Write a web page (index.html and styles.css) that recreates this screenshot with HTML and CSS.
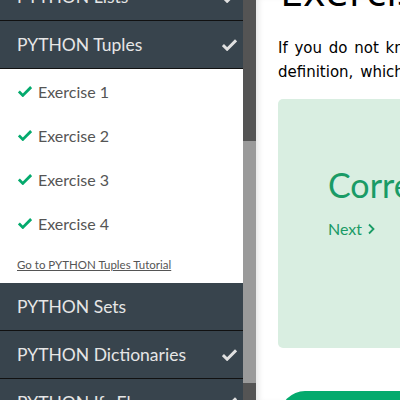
FILE: index.html
```html
<!DOCTYPE html>
<html>
<head>
<meta charset="utf-8">
<link rel="stylesheet" href="styles.css">
</head>
<body>
<div class="page">
  <nav class="sidebar">
    <div class="row first">PYTHON Lists<svg class="tick" viewBox="0 0 16 13"><path d="M1 7l4.5 4.5L15 2" fill="none" stroke="#e0e0e0" stroke-width="3.2"/></svg></div>
    <div class="row">PYTHON Tuples<svg class="tick" viewBox="0 0 16 13"><path d="M1 7l4.5 4.5L15 2" fill="none" stroke="#e0e0e0" stroke-width="3.2"/></svg></div>
    <div class="open">
      <div class="ex"><svg class="gtick" viewBox="0 0 16 13"><path d="M1 7l4.5 4.5L15 2" fill="none" stroke="#04aa6d" stroke-width="3.2"/></svg>Exercise 1</div>
      <div class="ex"><svg class="gtick" viewBox="0 0 16 13"><path d="M1 7l4.5 4.5L15 2" fill="none" stroke="#04aa6d" stroke-width="3.2"/></svg>Exercise 2</div>
      <div class="ex"><svg class="gtick" viewBox="0 0 16 13"><path d="M1 7l4.5 4.5L15 2" fill="none" stroke="#04aa6d" stroke-width="3.2"/></svg>Exercise 3</div>
      <div class="ex"><svg class="gtick" viewBox="0 0 16 13"><path d="M1 7l4.5 4.5L15 2" fill="none" stroke="#04aa6d" stroke-width="3.2"/></svg>Exercise 4</div>
      <a class="golink" href="#">Go to PYTHON Tuples Tutorial</a>
    </div>
    <div class="row">PYTHON Sets</div>
    <div class="row">PYTHON Dictionaries<svg class="tick" viewBox="0 0 16 13"><path d="M1 7l4.5 4.5L15 2" fill="none" stroke="#e0e0e0" stroke-width="3.2"/></svg></div>
    <div class="row">PYTHON If...Else<svg class="tick" viewBox="0 0 16 13"><path d="M1 7l4.5 4.5L15 2" fill="none" stroke="#e0e0e0" stroke-width="3.2"/></svg></div>
  </nav>
  <div class="scrollbar">
    <div class="track-top"></div>
    <div class="thumb"></div>
    <div class="track-bottom"></div>
  </div>
  <main class="main">
    <h1 class="title">Exercise:</h1>
    <p class="text">If you do not know the answer, look at the tuple<br>definition, which describes how tuples work.</p>
    <div class="result">
      <div class="correct">Correct!</div>
      <div class="next">Next<svg class="chev" viewBox="0 0 8 12"><path d="M2 1.5l4.5 4.5L2 10.5" fill="none" stroke="#1a9b66" stroke-width="1.8"/></svg></div>
    </div>
    <div class="btn"></div>
  </main>
</div>
</body>
</html>
```

FILE: styles.css
```css
html, body {
  margin: 0;
  padding: 0;
  background: #fff;
  overflow: hidden;
}
.page {
  display: flex;
  width: 400px;
  height: 400px;
  overflow: hidden;
}
.sidebar {
  width: 243px;
  flex: none;
  background: #38444d;
  margin-top: -27px;
  font-family: Lato, "Open Sans", sans-serif;
}
.row {
  height: 47px;
  border-bottom: 1px solid #111;
  display: flex;
  align-items: center;
  justify-content: space-between;
  padding: 0 6px 0 17px;
  color: #e6e6e6;
  font-size: 17.5px;
}
.tick {
  width: 15px;
  height: 13px;
}
.open {
  background: #fff;
  height: 214px;
  padding-top: 0;
  box-sizing: border-box;
}
.ex {
  height: 44px;
  display: flex;
  align-items: center;
  padding-left: 18px;
  color: #555;
  font-size: 16px;
}
.gtick {
  width: 14px;
  height: 12px;
  margin-right: 6px;
}
.golink {
  display: block;
  margin: 13px 0 0 17px;
  font-size: 11.5px;
  color: #555;
  text-decoration: underline;
}
.scrollbar {
  width: 13px;
  flex: none;
  display: flex;
  flex-direction: column;
}
.track-top {
  height: 141px;
  background: #545454;
}
.thumb {
  height: 242px;
  background: #9a9a9a;
}
.track-bottom {
  flex: 1;
  background: #545454;
}
.main {
  flex: 1;
  padding-left: 22px;
  box-shadow: inset 6px 0 6px -4px rgba(0,0,0,0.12);
  font-family: "DejaVu Sans", Verdana, sans-serif;
  white-space: nowrap;
  overflow: hidden;
}
.title {
  margin: -35px 0 0 2px;
  font-family: "Open Sans", sans-serif;
  font-weight: 400;
  font-size: 42px;
  line-height: 50px;
  color: #000;
}
.text {
  margin: 21px 0 0 0;
  font-size: 15px;
  line-height: 24px;
  word-spacing: 2px;
  color: #000;
}
.result {
  margin-top: 15px;
  height: 249px;
  width: 200px;
  background: #d9eee1;
  border-radius: 5px;
  padding: 66px 0 0 50px;
  box-sizing: border-box;
  font-family: Lato, "Open Sans", sans-serif;
  color: #1a9b66;
}
.correct {
  font-size: 34px;
  line-height: 40px;
}
.next {
  margin-top: 14px;
  font-size: 16px;
  display: flex;
  align-items: center;
}
.chev {
  width: 8px;
  height: 12px;
  margin-left: 5px;
}
.btn {
  margin: 43px 0 0 2px;
  width: 200px;
  height: 50px;
  background: #04aa6d;
  border-radius: 25px;
}
```
